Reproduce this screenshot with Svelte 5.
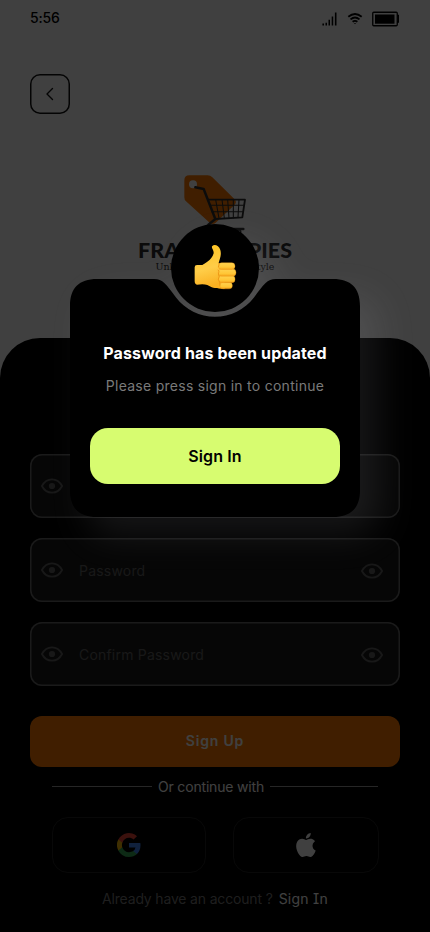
<script>
  const fields = [
    { label: '', toggle: false },
    { label: 'Password', toggle: true },
    { label: 'Confirm Password', toggle: true }
  ];
</script>

{#snippet eye()}
  <svg class="eye" width="24" height="24" viewBox="0 0 24 24" fill="none">
    <path d="M1.9 12C4.3 7.5 7.9 5.3 12 5.3S19.700 7.500 22.100 12C19.700 16.500 16.100 18.700 12 18.700S4.300 16.500 1.900 12Z" stroke="currentColor" stroke-width="1.8" stroke-linejoin="round" />
    <circle cx="12" cy="12" r="3.100" fill="currentColor" />
  </svg>
{/snippet}

<div class="screen">
  <header class="status">
    <span class="time">5:56</span>
    <div class="indicators">
      <svg width="15" height="14" viewBox="0 0 15 14">
        <path d="M.4 11.400H2V13.500H.4ZM3.500 10.800H5V13.500H3.500ZM6.500 7.700H8V13.500H6.500ZM9.700 4.500H11.200V13.500H9.700ZM12.900.5H14.500V13.500H12.900Z" />
      </svg>
      <svg width="16" height="14" viewBox="0 0 16 14" fill="none" stroke="#000" stroke-width="1.800">
        <path d="M1.300 4.800Q8-.7 14.700 4.800M3.500 7.400Q8 3.700 12.500 7.400M5.600 9.800Q8 7.900 10.400 9.800" />
        <path d="M7 11.100H9L8 12.300Z" fill="#000" stroke="none" />
      </svg>
      <svg width="28" height="16" viewBox="0 0 28 16">
        <rect x=".75" y="1.250" width="24.500" height="13.500" rx="1" fill="none" stroke="#000" stroke-width="1.300" />
        <rect x="3" y="3.500" width="19.500" height="9.200" />
        <path d="M25 4.500H26.300V11H25" fill="none" stroke="#000" stroke-width="1.400" />
      </svg>
    </div>
  </header>

  <button class="back" aria-label="Back">
    <svg width="24" height="24" viewBox="0 0 24 24" fill="none" stroke="#111" stroke-width="1.400" stroke-linecap="round" stroke-linejoin="round">
      <path d="M14.500 6.500 9 12l5.500 5.500" />
    </svg>
  </button>

  <div class="brand">
    <svg width="64" height="62" viewBox="174 39 192 186">
      <path d="M193 46H248Q256 46 262 52L328 117Q337 126 329 134L272 188Q263 196 254 188L183 124Q178 120 178 112V61Q178 46 193 46Z" fill="#ff7a00" />
      <circle cx="204" cy="73" r="12" fill="#fff" />
      <g fill="none" stroke="#2f2f2f" stroke-linejoin="round" stroke-linecap="round">
        <path d="M211 82 236 87 271 177 250 194V207H355" stroke-width="7.500" />
        <path d="M249 119H360L352 172 271 177" stroke-width="5.500" />
        <path d="M254 136H357M261 155H354M272 119 282 175M291 119 298 174M308 119 312 174M325 119 325 173M342 119 339 172" stroke-width="3.200" />
        <circle cx="342" cy="215" r="5" stroke-width="5" />
      </g>
    </svg>
    <div class="name"><span>FRA</span><span>PIES</span></div>
    <div class="tagline"><span>Unl</span><span>tyle</span></div>
  </div>

  <main class="panel">
    {#each fields as field}
      <label class="field">
        {@render eye()}
        <span>{field.label}</span>
        {#if field.toggle}<i>{@render eye()}</i>{/if}
      </label>
    {/each}
    <button class="signup">Sign Up</button>
    <div class="divider"><hr /><span>Or continue with</span><hr class="long" /></div>
    <div class="social">
      <button class="google" aria-label="Google">
        <svg width="24" height="24" viewBox="0 0 24 24">
          <path fill="#4285f4" d="M23.500 12.300c0-.8-.1-1.600-.2-2.300H12v4.500h6.500a5.500 5.500 0 0 1-2.400 3.600v3h3.900c2.200-2.100 3.500-5.100 3.500-8.800Z" />
          <path fill="#34a853" d="M12 24c3.200 0 6-1.100 8-2.900l-3.900-3c-1.100.7-2.500 1.200-4.100 1.200-3.100 0-5.800-2.100-6.700-5H1.300v3.100A12 12 0 0 0 12 24Z" />
          <path fill="#fbbc05" d="M5.300 14.300a7.200 7.200 0 0 1 0-4.600V6.600h-4a12 12 0 0 0 0 10.800l4-3.100Z" />
          <path fill="#ea4335" d="M12 4.800c1.800 0 3.300.6 4.600 1.800L20 3.200A12 12 0 0 0 1.300 6.600l4 3.100c.9-2.800 3.600-4.900 6.700-4.900Z" />
        </svg>
      </button>
      <button class="apple" aria-label="Apple">
        <svg width="20" height="24" viewBox="2.300 0 19.500 24" fill="#fff">
          <path d="M12.150 6.900c-.95 0-2.420-1.080-3.960-1.040-2.040.03-3.910 1.180-4.960 3.010-2.120 3.680-.55 9.100 1.520 12.090 1.010 1.450 2.210 3.090 3.790 3.040 1.520-.07 2.090-.99 3.940-.99 1.830 0 2.350.99 3.960.95 1.640-.03 2.680-1.480 3.680-2.950 1.160-1.690 1.640-3.330 1.660-3.420-.04-.01-3.180-1.220-3.220-4.860-.03-3.040 2.480-4.490 2.600-4.560-1.430-2.090-3.620-2.320-4.390-2.380-2-.16-3.680 1.090-4.610 1.090ZM15.530 3.830c.84-1.010 1.400-2.430 1.250-3.830-1.210.05-2.660.81-3.530 1.820-.78.9-1.450 2.340-1.270 3.710 1.340.1 2.710-.69 3.560-1.700Z" />
        </svg>
      </button>
    </div>
    <p class="account"><span>Already have an account ?</span><a href="#signin">Sign In</a></p>
  </main>

  <div class="overlay"></div>

  <div class="dialog">
    <svg class="shape" width="290" height="293" viewBox="0 -55 290 293">
      <path d="M27 0H84C93 0 96 5 106 18.500A49 49 0 0 0 184 18.500C194 5 197 0 206 0H263C281 0 290 9 290 27V211C290 229 281 238 263 238H27C9 238 0 229 0 211V27C0 9 9 0 27 0Z" />
      <circle cx="145" cy="-11" r="44" />
    </svg>
    <svg class="thumb" width="42.670" height="46" viewBox="208 252 128 138">
      <defs>
        <linearGradient id="skin" x1="0" y1="0" x2="0.200" y2="1">
          <stop offset="0" stop-color="#ffc31e" />
          <stop offset=".6" stop-color="#ffcd48" />
          <stop offset="1" stop-color="#fab021" />
        </linearGradient>
        <linearGradient id="finger" x1="0" y1="0" x2="0" y2="1">
          <stop offset="0" stop-color="#ffd350" />
          <stop offset=".65" stop-color="#ffc636" />
          <stop offset="1" stop-color="#f5a31a" />
        </linearGradient>
      </defs>
      <path d="M210 322Q210 314 219 315L233 315C251 306 264 292 267 280C268 270 258 263 263 258C269 252 283 256 287 270C291 284 286 294 282 309L300 320V386H290C270 386 260 382 248 375Q237 371 217 374Q210 373 210 364Z" fill="url(#skin)" />
      <g fill="url(#finger)" stroke="#ec9514" stroke-width="1">
        <rect x="286" y="367" width="37" height="19.500" rx="9" />
        <rect x="282" y="347" width="49" height="21" rx="9" />
        <rect x="281" y="327" width="53" height="21.500" rx="10" />
        <rect x="281" y="308" width="50" height="20.500" rx="10" />
      </g>
      <path d="M281 322Q285 314 282 309M280 329Q286 335 281 342Q286 351 281 358Q286 365 286 377" fill="none" stroke="#e98b0c" stroke-width="2" />
    </svg>
    <h1>Password has been updated</h1>
    <p>Please press sign in to continue</p>
    <button>Sign In</button>
  </div>
</div>

<style>
  :global(body) { margin: 0; background: #000; }
  .screen {
    position: relative; box-sizing: border-box; width: 430px; height: 932px; overflow: hidden;
    background: #fff; font-family: Inter, 'Liberation Sans', sans-serif;
    display: flex; flex-direction: column;
  }
  button { border: 0; padding: 0; font: inherit; display: flex; align-items: center; justify-content: center; }
  .status { height: 36px; padding: 0 30px; display: flex; align-items: center; justify-content: space-between; }
  .time { font-size: 14px; font-weight: 500; letter-spacing: -.15px; padding-bottom: 2px; }
  .indicators { display: flex; align-items: center; gap: 9.500px; padding-top: 1px; }
  .back { box-sizing: border-box; width: 40px; height: 40px; margin: 38px 0 0 30px; box-shadow: inset 0 0 0 1.500px #111; border-radius: 10px; background: none; flex: none; }
  .brand { height: 165px; margin-top: 59px; display: flex; flex-direction: column; align-items: center; flex: none; color: #2f2f2f; }
  .brand svg { flex: none; }
  .name { width: 154px; height: 22px; margin-top: 4px; display: flex; justify-content: space-between; font: 900 21.500px/22px Lato, sans-serif; }
  .tagline { width: 119px; margin-top: 0; display: flex; justify-content: space-between; font: 9.500px/12px 'DejaVu Serif', serif; }
  .panel { box-sizing: border-box; height: 594px; padding: 116px 30px 0; border-radius: 40px 40px 0 0; background: #000; flex: none; display: flex; flex-direction: column; }
  .field { box-sizing: border-box; height: 64px; margin-bottom: 20px; padding: 0 16px 0 10px; box-shadow: inset 0 0 0 1.500px #686868; border-radius: 12px; background: #1b1b1b; display: flex; align-items: center; color: #606060; }
  .field span { margin-left: 15px; flex: 1; font-size: 14px; letter-spacing: .2px; }
  .field i { display: flex; padding-top: 2px; }
  .eye { flex: none; }
  .signup { box-sizing: border-box; height: 51px; padding-bottom: 2px; margin-top: 10px; flex: none; border-radius: 12px; background: #ff7a00; color: #fff; font-size: 14px; font-weight: 600; letter-spacing: .8px; font-feature-settings: 'cv08'; }
  .divider { height: 20px; margin: 9px 22px 0; display: flex; align-items: center; justify-content: space-between; color: #fff; font-size: 14px; letter-spacing: -.18px; }
  hr { width: 100px; height: 1px; margin: 0; border: 0; background: #999; }
  hr.long { width: 108px; }
  .social { height: 56px; margin: 21px 21px 0 22px; display: flex; justify-content: space-between; }
  .social button { box-sizing: border-box; border: 1px solid #222; border-radius: 16px; background: none; }
  .google { width: 154px; }
  .apple { width: 146px; }
  .account { margin: 16px 0 0; height: 20px; display: flex; justify-content: center; gap: 6px; line-height: 20px; font-size: 14px; color: #777; letter-spacing: -.17px; }
  .account a { color: #fff; text-decoration: none; letter-spacing: .25px; font-feature-settings: 'cv08'; }
  .overlay { position: absolute; inset: 0; background: rgba(0, 0, 0, .75); }
  .dialog { position: absolute; left: 70px; top: 279px; box-sizing: border-box; width: 290px; height: 238px; padding: 64px 20px 0; display: flex; flex-direction: column; text-align: center; }
  .shape { position: absolute; left: 0; top: -55px; overflow: visible; filter: drop-shadow(18px 18px 18px rgba(211, 209, 216, .105)); }
  .thumb { position: absolute; left: 124.300px; top: -35px; }
  h1, .dialog p, .dialog button { position: relative; margin: 0; white-space: nowrap; }
  h1 { color: #fff; font-size: 16px; line-height: 20px; font-weight: 700; letter-spacing: .13px; }
  .dialog p { margin-top: 13px; color: #7a7a7a; font-size: 14px; line-height: 20px; letter-spacing: .27px; }
  .dialog button { height: 56px; margin-top: 32px; flex: none; border-radius: 18px; background: #d7fc70; color: #000; font-size: 16px; font-weight: 600; letter-spacing: .1px; }
</style>
